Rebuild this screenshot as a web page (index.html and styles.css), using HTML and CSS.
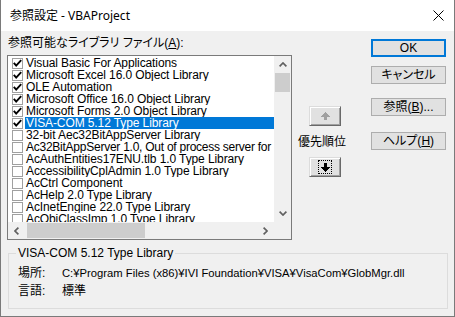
FILE: index.html
```html
<!DOCTYPE html>
<html lang="ja">
<head>
<meta charset="utf-8">
<title>参照設定 - VBAProject</title>
<link rel="stylesheet" href="styles.css">
</head>
<body>
<div class="window">
  <div class="titlebar">
    <span class="title">参照設定 - VBAProject</span>
    <svg class="close" width="11" height="11" viewBox="0 0 11 11"><path d="M0.5 0.5 L10.5 10.5 M10.5 0.5 L0.5 10.5" stroke="#000" stroke-width="1" fill="none"/></svg>
  </div>
  <div class="main">
    <div class="top">
      <div class="leftcol">
        <div class="label">参照可能なライブラリ ファイル(<u>A</u>):</div>
        <div class="listbox">
          <div class="listarea">
            <div class="items">
              <div class="row"><span class="cb"><svg viewBox="0 0 9 9" width="9" height="9"><polyline points="0.8,3.8 3.2,6.6 8.2,1.2" fill="none" stroke="#000" stroke-width="1.9"/></svg></span><span class="txt">Visual Basic For Applications</span></div>
              <div class="row"><span class="cb"><svg viewBox="0 0 9 9" width="9" height="9"><polyline points="0.8,3.8 3.2,6.6 8.2,1.2" fill="none" stroke="#000" stroke-width="1.9"/></svg></span><span class="txt">Microsoft Excel 16.0 Object Library</span></div>
              <div class="row"><span class="cb"><svg viewBox="0 0 9 9" width="9" height="9"><polyline points="0.8,3.8 3.2,6.6 8.2,1.2" fill="none" stroke="#000" stroke-width="1.9"/></svg></span><span class="txt">OLE Automation</span></div>
              <div class="row"><span class="cb"><svg viewBox="0 0 9 9" width="9" height="9"><polyline points="0.8,3.8 3.2,6.6 8.2,1.2" fill="none" stroke="#000" stroke-width="1.9"/></svg></span><span class="txt">Microsoft Office 16.0 Object Library</span></div>
              <div class="row"><span class="cb"><svg viewBox="0 0 9 9" width="9" height="9"><polyline points="0.8,3.8 3.2,6.6 8.2,1.2" fill="none" stroke="#000" stroke-width="1.9"/></svg></span><span class="txt">Microsoft Forms 2.0 Object Library</span></div>
              <div class="row selected"><span class="cb"><svg viewBox="0 0 9 9" width="9" height="9"><polyline points="0.8,3.8 3.2,6.6 8.2,1.2" fill="none" stroke="#000" stroke-width="1.9"/></svg></span><span class="txt">VISA-COM 5.12 Type Library</span></div>
              <div class="row"><span class="cb"></span><span class="txt">32-bit Aec32BitAppServer Library</span></div>
              <div class="row"><span class="cb"></span><span class="txt tight">Ac32BitAppServer 1.0, Out of process server for</span></div>
              <div class="row"><span class="cb"></span><span class="txt">AcAuthEntities17ENU.tlb 1.0 Type Library</span></div>
              <div class="row"><span class="cb"></span><span class="txt">AccessibilityCplAdmin 1.0 Type Library</span></div>
              <div class="row"><span class="cb"></span><span class="txt">AcCtrl Component</span></div>
              <div class="row"><span class="cb"></span><span class="txt">AcHelp 2.0 Type Library</span></div>
              <div class="row"><span class="cb"></span><span class="txt">AcInetEngine 22.0 Type Library</span></div>
              <div class="row"><span class="cb"></span><span class="txt">AcObjClassImp 1.0 Type Library</span></div>
            </div>
            <div class="vscroll">
              <div class="sbtn"><svg width="8" height="5" viewBox="0 0 8 5"><polyline points="0.6,4.4 4,1 7.4,4.4" fill="none" stroke="#606060" stroke-width="1.7"/></svg></div>
              <div class="vthumb"></div>
              <div class="vtrack"></div>
              <div class="sbtn"><svg width="8" height="5" viewBox="0 0 8 5"><polyline points="0.6,0.6 4,4 7.4,0.6" fill="none" stroke="#606060" stroke-width="1.7"/></svg></div>
            </div>
          </div>
          <div class="hscroll">
            <div class="sbtn"><svg width="5" height="8" viewBox="0 0 5 8"><polyline points="4.4,0.6 1,4 4.4,7.4" fill="none" stroke="#606060" stroke-width="1.7"/></svg></div>
            <div class="htrack"><div class="hthumb"></div></div>
            <div class="sbtn"><svg width="5" height="8" viewBox="0 0 5 8"><polyline points="0.6,0.6 4,4 0.6,7.4" fill="none" stroke="#606060" stroke-width="1.7"/></svg></div>
            <div class="corner"></div>
          </div>
        </div>
      </div>
      <div class="midcol">
        <div class="pbtn"><svg width="9" height="9" viewBox="0 0 9 9" shape-rendering="crispEdges"><polygon points="4.5,0 9,5 6,5 6,8 3,8 3,5 0,5" fill="#a0a0a0"/></svg></div>
        <div class="plabel">優先順位</div>
        <div class="pbtn"><span class="focus"><svg width="9" height="9" viewBox="0 0 9 9" shape-rendering="crispEdges"><polygon points="3,0 6,0 6,4 9,4 4.5,9 0,4 3,4" fill="#000"/></svg></span></div>
      </div>
      <div class="rightcol">
        <div class="btn default">OK</div>
        <div class="btn cancel">キャンセル</div>
        <div class="btn browse">参照(<u>B</u>)...</div>
        <div class="btn help">ヘルプ(<u>H</u>)</div>
      </div>
    </div>
    <fieldset class="group">
      <legend>VISA-COM 5.12 Type Library</legend>
      <div class="info">
        <div>場所:</div><div class="path">C:¥Program Files (x86)¥IVI Foundation¥VISA¥VisaCom¥GlobMgr.dll</div>
        <div>言語:</div><div>標準</div>
      </div>
    </fieldset>
  </div>
</div>
</body>
</html>
```
FILE: styles.css
```css
* { box-sizing: border-box; }
html, body { margin: 0; padding: 0; }
body {
  width: 455px;
  height: 317px;
  overflow: hidden;
  background: #f0f0f0;
  font-family: "Liberation Sans", "Noto Sans CJK JP", sans-serif;
  font-size: 12px;
  color: #000;
  font-feature-settings: "palt";
}
u { text-decoration: underline; text-underline-offset: 1px; }

.window {
  width: 455px;
  height: 317px;
  display: flex;
  flex-direction: column;
  background: #f0f0f0;
  border: 1px solid #7a7a7a;
  border-top: none;
}

.titlebar {
  height: 31px;
  flex: none;
  background: #fff;
  display: flex;
  align-items: center;
  padding: 0 10px 0 9px;
}
.title {
  font-family: "Noto Sans", "Noto Sans CJK JP", sans-serif;
  font-size: 12px;
  line-height: 16px;
}
.close { margin-left: auto; display: block; }

.main {
  flex: 1;
  display: flex;
  flex-direction: column;
  padding-left: 6px;
}
.top { display: flex; }

.leftcol { width: 285px; padding-top: 5px; }
.label {
  height: 14px;
  line-height: 14px;
  margin-bottom: 5px;
  padding-left: 1px;
  white-space: nowrap;
}

.listbox {
  width: 285px;
  height: 185px;
  border: 1px solid #7a7a7a;
  background: #fff;
  display: flex;
  flex-direction: column;
}
.listarea { height: 166px; display: flex; flex: none; }
.items { width: 266px; padding-top: 1px; overflow: hidden; flex: none; }
.row { height: 12px; display: flex; align-items: center; white-space: nowrap; }
.cb {
  width: 11px;
  height: 11px;
  margin-left: 4px;
  margin-right: 2px;
  border: 1px solid #a0a0a0;
  background: #fff;
  flex: none;
  display: flex;
  align-items: center;
  justify-content: center;
}
.cb svg { display: block; }
.txt {
  flex: 1;
  height: 12px;
  line-height: 12px;
  padding-left: 1px;
  overflow: hidden;
  letter-spacing: -0.1px;
}
.txt.tight { letter-spacing: -0.25px; }
.row.selected .txt { background: #0078d7; color: #fff; }

.vscroll {
  width: 17px;
  flex: none;
  background: #f0f0f0;
  display: flex;
  flex-direction: column;
}
.sbtn {
  width: 17px;
  height: 17px;
  flex: none;
  display: flex;
  align-items: center;
  justify-content: center;
}
.sbtn svg { display: block; }
.vthumb { margin: 0 1px; height: 19px; background: #cdcdcd; flex: none; }
.vtrack { flex: 1; }

.hscroll { height: 17px; flex: none; display: flex; background: #f0f0f0; }
.htrack { width: 232px; flex: none; padding-top: 1px; }
.hthumb { margin-left: 2px; width: 118px; height: 15px; background: #cdcdcd; }
.corner { width: 17px; flex: none; background: #f0f0f0; }

.midcol {
  width: 79px;
  display: flex;
  flex-direction: column;
  align-items: flex-start;
  padding-left: 17px;
  padding-top: 75px;
}
.pbtn {
  width: 32px;
  height: 20px;
  background: #e1e1e1;
  border: 1px solid;
  border-color: #dcdcdc #696969 #696969 #dcdcdc;
  box-shadow: inset 1px 1px 0 #fff, inset -1px -1px 0 #a0a0a0;
  display: flex;
  align-items: center;
  justify-content: center;
}
.pbtn svg { display: block; }
.focus {
  width: 14px;
  height: 14px;
  border: 1px dotted #000;
  display: flex;
  align-items: center;
  justify-content: center;
}
.plabel {
  line-height: 14px;
  height: 14px;
  margin: 9px 0 8px -11px;
  white-space: nowrap;
}

.rightcol { width: 75px; padding-top: 8px; display: flex; flex-direction: column; }
.btn {
  width: 75px;
  height: 18px;
  background: #e1e1e1;
  border: 1px solid #adadad;
  display: flex;
  align-items: center;
  justify-content: center;
  white-space: nowrap;
  line-height: 14px;
}
.btn.default { border: 2px solid #0078d7; }
.btn.cancel { margin-top: 9px; }
.btn.browse { margin-top: 14px; }
.btn.help { margin-top: 16px; }

.group {
  margin: 6px 0 0 1px;
  width: 440px;
  border: 1px solid #dcdcdc;
  padding: 0 0 8px 7px;
  min-width: 0;
}
.group legend {
  padding: 0 2px;
  line-height: 14px;
  height: 14px;
}
.info {
  display: grid;
  grid-template-columns: 44px auto;
  margin-top: 4px;
  padding-left: 2px;
}
.info div { line-height: 18px; white-space: nowrap; }
.info .path { font-size: 11.25px; }
```
